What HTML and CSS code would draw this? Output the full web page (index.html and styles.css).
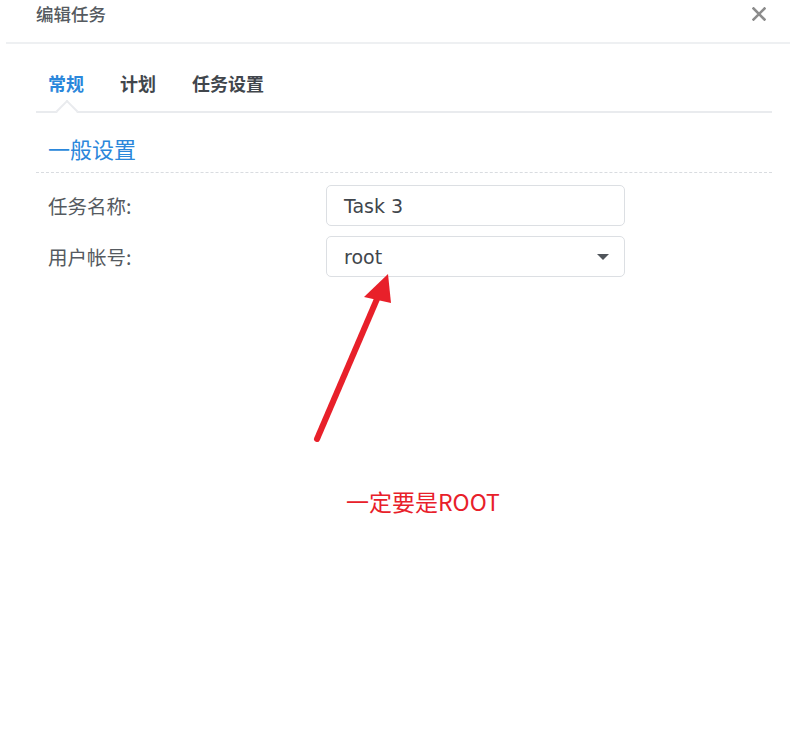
FILE: index.html
```html
<!DOCTYPE html>
<html lang="zh-CN">
<head>
<meta charset="utf-8">
<title>编辑任务</title>
<link rel="stylesheet" href="styles.css">
</head>
<body>
<div class="dialog">
  <div class="header">
    <div class="title">编辑任务</div>
    <svg class="close" width="14" height="14" viewBox="0 0 14 14"><path d="M1.5 1.5L12.5 12.5M12.5 1.5L1.5 12.5" stroke="#8c8c8c" stroke-width="2.6" stroke-linecap="square"/></svg>
  </div>
  <div class="tabs">
    <div class="tab active">常规</div>
    <div class="tab">计划</div>
    <div class="tab">任务设置</div>
  </div>
  <div class="section-title">一般设置</div>
  <div class="form">
    <div class="label">任务名称:</div>
    <div class="field">Task 3</div>
    <div class="label">用户帐号:</div>
    <div class="field select"><span>root</span><span class="caret"></span></div>
  </div>
</div>
<svg class="annot-arrow" width="790" height="745" viewBox="0 0 790 745">
  <line x1="317" y1="439" x2="380" y2="292" stroke="#e8202a" stroke-width="6" stroke-linecap="round"/>
  <polygon points="388,274 364,297 391,303" fill="#e8202a"/>
</svg>
<div class="annot-text">一定要是ROOT</div>
</body>
</html>
```
FILE: styles.css
```css
html, body {
  margin: 0;
  padding: 0;
  background: #ffffff;
}
body {
  width: 790px;
  height: 745px;
  position: relative;
  overflow: hidden;
  font-family: "DejaVu Sans", "Noto Sans CJK SC", sans-serif;
}
.dialog {
  display: flex;
  flex-direction: column;
}
.header {
  height: 42px;
  margin-left: 6px;
  padding: 0 24px 0 30px;
  border-bottom: 2px solid #eef0f2;
  display: flex;
  justify-content: space-between;
  align-items: flex-start;
}
.title {
  font-family: "Noto Sans CJK SC", sans-serif;
  font-size: 17.5px;
  line-height: 28px;
  color: #555a60;
  font-weight: 500;
}
.close {
  margin-top: 7px;
}
.tabs {
  margin: 27px 18px 0 36px;
  padding: 0 0 16px 12px;
  border-bottom: 2px solid #e9ebee;
  display: flex;
  gap: 36px;
}
.tab {
  font-family: "Noto Sans CJK SC", sans-serif;
  font-size: 18px;
  line-height: 24px;
  font-weight: 700;
  color: #41464c;
  position: relative;
}
.tab.active {
  color: #2b87db;
}
.tab.active::after {
  content: "";
  position: absolute;
  left: 50%;
  bottom: -24px;
  width: 14px;
  height: 14px;
  margin-left: -7px;
  background: #ffffff;
  border-top: 2px solid #e9ebee;
  border-left: 2px solid #e9ebee;
  transform: rotate(45deg);
}
.section-title {
  margin: 20px 18px 0 36px;
  padding: 0 0 9px 12px;
  border-bottom: 1px dashed #d9dce0;
  font-family: "Noto Sans CJK SC", sans-serif;
  font-size: 22px;
  line-height: 30px;
  color: #2b87db;
}
.form {
  margin: 12px 0 0 48px;
  display: grid;
  grid-template-columns: 278px 299px;
  row-gap: 10px;
  align-items: center;
}
.label {
  font-family: "Noto Sans CJK SC", sans-serif;
  font-size: 19.5px;
  color: #555a60;
}
.field {
  box-sizing: border-box;
  height: 41px;
  border: 1px solid #dcdfe3;
  border-radius: 5px;
  padding: 0 15px 0 17px;
  display: flex;
  align-items: center;
  justify-content: space-between;
  font-size: 19px;
  color: #41464c;
}
.caret {
  width: 0;
  height: 0;
  border-left: 6px solid transparent;
  border-right: 6px solid transparent;
  border-top: 6px solid #50555b;
}
.annot-arrow {
  position: absolute;
  left: 0;
  top: 0;
}
.annot-text {
  position: absolute;
  left: 346px;
  top: 485px;
  font-family: "Noto Sans CJK SC", sans-serif;
  font-size: 23px;
  line-height: 32px;
  color: #e8202a;
}
```
